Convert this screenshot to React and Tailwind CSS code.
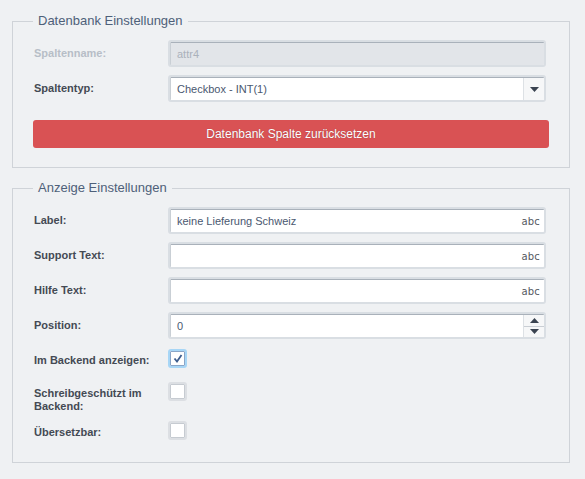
import React from "react";

const font = { fontFamily: '"Liberation Sans", Arial, sans-serif' };

function Label({ children, disabled, className = "" }) {
  return (
    <div
      className={`w-[135px] shrink-0 text-[11px] font-bold leading-[13px] pl-[1px] ${
        disabled ? "text-[#b7bec7]" : "text-[#444a53]"
      } ${className}`}
    >
      {children}
    </div>
  );
}

function Field({ value, disabled, right }) {
  return (
    <div className="w-[378px] h-[27px] rounded-[3px] border-2 border-[#d9dee3] flex">
      <div
        className={`flex-1 flex items-center border-t border-t-[#a9b1ba] border-l border-l-[#c9cfd5] rounded-[1px] ${
          disabled ? "bg-[#e2e5e9]" : "bg-white"
        }`}
      >
        <span
          className={`flex-1 pl-[6px] text-[11px] ${
            disabled ? "text-[#aab1bb]" : "text-[#4a5870]"
          }`}
        >
          {value}
        </span>
        {right}
      </div>
    </div>
  );
}

function Abc() {
  return (
    <span
      className="pr-[4px] text-[10px] text-[#55595f] tracking-[0.2px]"
      style={{ fontFamily: '"DejaVu Sans", sans-serif' }}
    >
      abc
    </span>
  );
}

function Tri({ up }) {
  return (
    <svg width="9" height="5" viewBox="0 0 9 5">
      {up ? (
        <polygon points="0,5 9,5 4.5,0" fill="#3a4350" />
      ) : (
        <polygon points="0,0 9,0 4.5,5" fill="#3a4350" />
      )}
    </svg>
  );
}

function SelectBtn() {
  return (
    <div className="w-[21px] h-full border-l border-l-[#dde1e5] bg-[#f6f7f8] flex items-center justify-center">
      <Tri />
    </div>
  );
}

function Spinner() {
  return (
    <div className="w-[21px] h-full border-l border-l-[#dde1e5] bg-[#f6f7f8] flex flex-col">
      <div className="flex-1 flex items-center justify-center border-b border-b-[#c9ced4]">
        <Tri up />
      </div>
      <div className="flex-1 flex items-center justify-center">
        <Tri />
      </div>
    </div>
  );
}

function Check({ checked }) {
  return (
    <div
      className={`w-[19px] h-[19px] rounded-[3px] border-2 ${
        checked ? "border-[#a7d6f6]" : "border-[#dcdfe3]"
      }`}
    >
      <div
        className={`w-full h-full rounded-[1px] border bg-white flex items-center justify-center ${
          checked ? "border-[#8aa6c8]" : "border-[#c6cbd1]"
        }`}
      >
        {checked && (
          <svg width="10" height="9" viewBox="0 0 10 9">
            <polyline
              points="1.5,4.5 4,7.5 8.5,1"
              fill="none"
              stroke="#3d5d8e"
              strokeWidth="1.8"
            />
          </svg>
        )}
      </div>
    </div>
  );
}

function Legend({ children }) {
  return (
    <legend className="px-[5px] text-[13px] leading-[18px] text-[#4e6079]">
      {children}
    </legend>
  );
}

export default function App() {
  return (
    <div className="w-[585px] h-[479px] bg-[#eff1f3] pt-[12px] pl-[12px]" style={font}>
      <fieldset className="w-[558px] border border-[#cfd3d8] px-[20px] pt-[10px] pb-[19px] m-0">
        <Legend>Datenbank Einstellungen</Legend>
        <div className="flex items-center">
          <Label disabled>Spaltenname:</Label>
          <Field value="attr4" disabled />
        </div>
        <div className="flex items-center mt-[8px]">
          <Label>Spaltentyp:</Label>
          <Field value="Checkbox - INT(1)" right={<SelectBtn />} />
        </div>
        <button className="mt-[18px] w-full h-[28px] rounded-[3px] bg-[#d95254] text-white text-[12px] [text-shadow:0_0_1px_rgba(0,0,0,0.35)]">
          Datenbank Spalte zurücksetzen
        </button>
      </fieldset>

      <fieldset className="mt-[11px] w-[558px] border border-[#cfd3d8] px-[20px] pt-[10px] pb-[22px] m-0">
        <Legend>Anzeige Einstellungen</Legend>
        <div className="flex items-center">
          <Label>Label:</Label>
          <Field value="keine Lieferung Schweiz" right={<Abc />} />
        </div>
        <div className="flex items-center mt-[8px]">
          <Label>Support Text:</Label>
          <Field value="" right={<Abc />} />
        </div>
        <div className="flex items-center mt-[8px]">
          <Label>Hilfe Text:</Label>
          <Field value="" right={<Abc />} />
        </div>
        <div className="flex items-center mt-[8px]">
          <Label>Position:</Label>
          <Field value="0" right={<Spinner />} />
        </div>
        <div className="flex items-start mt-[10px]">
          <Label className="pt-[5px]">Im Backend anzeigen:</Label>
          <Check checked />
        </div>
        <div className="flex items-start mt-[14px]">
          <Label className="pt-[5px]">
            Schreibgeschützt im
            <br />
            Backend:
          </Label>
          <Check />
        </div>
        <div className="flex items-start mt-[8px]">
          <Label className="pt-[5px]">Übersetzbar:</Label>
          <Check />
        </div>
      </fieldset>
    </div>
  );
}
